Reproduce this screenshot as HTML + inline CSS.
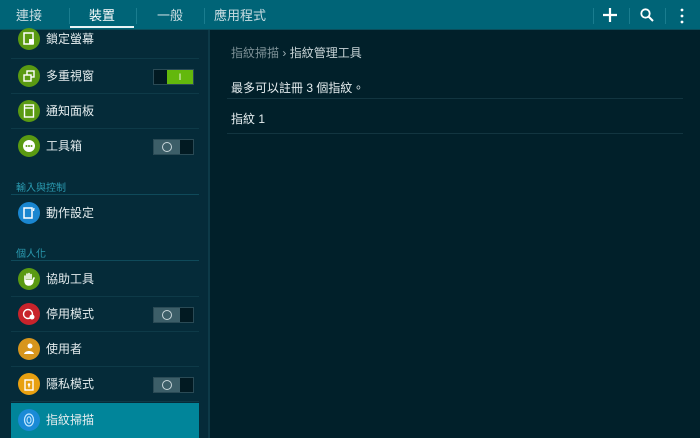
<!DOCTYPE html>
<html><head><meta charset="utf-8"><style>
*{margin:0;padding:0;box-sizing:border-box}
body{width:700px;height:438px;overflow:hidden;background:#01202a;font-family:"Liberation Sans","Noto Sans CJK TC",sans-serif;position:relative;color:#e6eef0}
.top{position:absolute;left:0;top:0;width:700px;height:30px;background:#006477;border-bottom:1px solid #0b4e5c}
.tab{position:absolute;top:0;height:29px;line-height:31px;font-size:13px;color:#c9dde2}
.sep{position:absolute;top:8px;width:1px;height:16px;background:#1a7d8f}
.ul{position:absolute;left:70px;top:26px;width:64px;height:2px;background:#e8f3f5}
.left{position:absolute;left:0;top:30px;width:208px;height:408px;background:#052b39}
.vb{position:absolute;left:208px;top:30px;width:2px;height:408px;background:#0d3a48}
.row{position:absolute;left:11px;width:188px;height:35px;border-bottom:1px solid #0e3a48}
.row .ic{position:absolute;left:7px;top:6px;width:22px;height:22px;border-radius:50%}
.row .ic svg{position:absolute;left:0;top:0}
.row .t{position:absolute;left:35px;top:0;line-height:34px;font-size:12px;color:#e4ecee}
.tg{position:absolute;left:142px;top:10px;width:41px;height:16px;background:#021a22;border:1px solid #2a4a55}
.tg.on .k{position:absolute;right:0;top:0;width:26px;height:14px;background:#63b80c;color:#fff;font-size:9px;text-align:center;line-height:14px}
.tg.off .k{position:absolute;left:0;top:0;width:26px;height:14px;background:#3c5e68}
.tg.off .k:after{content:"";position:absolute;left:8px;top:2px;width:8px;height:8px;border:1.5px solid #c8d6da;border-radius:50%}
.hd{position:absolute;left:16px;font-size:10px;color:#2a9ab0}
.hl{position:absolute;left:11px;width:188px;height:1px;background:#0f4a5a}
.sel{background:#01859a}
.rt{position:absolute;font-size:12px}
.ln{position:absolute;left:227px;width:456px;height:1px;background:#123540}
</style></head><body>
<div class="top">
<div class="tab" style="left:16px">連接</div>
<div class="sep" style="left:69px"></div>
<div class="tab" style="left:89px;color:#fff">裝置</div>
<div class="sep" style="left:136px"></div>
<div class="tab" style="left:157px">一般</div>
<div class="sep" style="left:204px"></div>
<div class="tab" style="left:214px">應用程式</div>
<div class="ul"></div>
<div class="sep" style="left:593px"></div>
<div class="sep" style="left:629px"></div>
<div class="sep" style="left:665px"></div>
<svg style="position:absolute;left:602px;top:7px" width="16" height="16"><path d="M8 1V15M1 8H15" stroke="#fff" stroke-width="2.2"/></svg>
<svg style="position:absolute;left:640px;top:8px" width="14" height="14"><circle cx="5.5" cy="5.5" r="4.2" stroke="#fff" stroke-width="1.8" fill="none"/><path d="M8.5 8.5L13 13" stroke="#fff" stroke-width="2"/></svg>
<svg style="position:absolute;left:680px;top:8px" width="4" height="16"><circle cx="2" cy="2" r="1.4" fill="#fff"/><circle cx="2" cy="8" r="1.4" fill="#fff"/><circle cx="2" cy="14" r="1.4" fill="#fff"/></svg>
</div>
<div class="left"></div><div class="vb"></div>
<div class="row" style="top:24px"><div class="ic" style="background:#5a9a12;top:4px"><svg width="22" height="22"><rect x="6" y="5" width="9" height="11" fill="none" stroke="#fff" stroke-width="1.5"/><rect x="11" y="11" width="5" height="5" fill="#fff"/></svg></div><div class="t" style="line-height:30px">鎖定螢幕</div></div>
<div class="row" style="top:59px"><div class="ic" style="background:#5a9a12"><svg width="22" height="22"><rect x="9" y="6" width="7" height="6" fill="none" stroke="#fff" stroke-width="1.4"/><rect x="6" y="10" width="7" height="6" fill="#5a9a12" stroke="#fff" stroke-width="1.4"/></svg></div><div class="t">多重視窗</div><div class="tg on"><div class="k">I</div></div></div>
<div class="row" style="top:94px"><div class="ic" style="background:#5a9a12"><svg width="22" height="22"><rect x="6.5" y="5" width="9" height="12" fill="none" stroke="#fff" stroke-width="1.4"/><path d="M6.5 8H15.5" stroke="#fff" stroke-width="1.4"/></svg></div><div class="t">通知面板</div></div>
<div class="row" style="top:129px;border:none"><div class="ic" style="background:#5a9a12"><svg width="22" height="22"><circle cx="11" cy="11" r="6" fill="#fff"/><circle cx="8.5" cy="11" r="1" fill="#5a9a12"/><circle cx="11" cy="11" r="1" fill="#5a9a12"/><circle cx="13.5" cy="11" r="1" fill="#5a9a12"/></svg></div><div class="t">工具箱</div><div class="tg off"><div class="k"></div></div></div>
<div class="hd" style="top:179px">輸入與控制</div><div class="hl" style="top:194px"></div>
<div class="row" style="top:196px;border:none"><div class="ic" style="background:#1a86d0"><svg width="22" height="22"><rect x="6" y="6" width="8" height="10" fill="none" stroke="#fff" stroke-width="1.5"/><path d="M16 6L15.5 9" stroke="#fff" stroke-width="1.2"/></svg></div><div class="t">動作設定</div></div>
<div class="hd" style="top:245px">個人化</div><div class="hl" style="top:260px"></div>
<div class="row" style="top:262px"><div class="ic" style="background:#5a9a12"><svg width="22" height="22"><path d="M7 12V8M9 11V6M11 11V5.5M13 11V6.5M15 12L16 10M7 12C7 16 9 17 11 17S15 15.5 15 12" stroke="#fff" stroke-width="1.6" fill="#fff" stroke-linecap="round"/></svg></div><div class="t">協助工具</div></div>
<div class="row" style="top:297px"><div class="ic" style="background:#c8232b"><svg width="22" height="22"><circle cx="10" cy="11" r="4.5" fill="none" stroke="#fff" stroke-width="1.4"/><circle cx="14" cy="14" r="2.5" fill="#fff"/></svg></div><div class="t">停用模式</div><div class="tg off"><div class="k"></div></div></div>
<div class="row" style="top:332px"><div class="ic" style="background:#d7951c"><svg width="22" height="22"><circle cx="12" cy="8" r="2.5" fill="#fff"/><path d="M6 16C7 12 15 12 16 16Z" fill="#fff"/></svg></div><div class="t">使用者</div></div>
<div class="row" style="top:367px"><div class="ic" style="background:#e8a010"><svg width="22" height="22"><rect x="7" y="7" width="8" height="10" fill="none" stroke="#fff" stroke-width="1.4"/><circle cx="11" cy="11.5" r="1.3" fill="#fff"/><path d="M11 12V14.5" stroke="#fff" stroke-width="1.2"/></svg></div><div class="t">隱私模式</div><div class="tg off"><div class="k"></div></div></div>
<div class="row sel" style="top:403px;border:none"><div class="ic" style="background:#1a8ad6"><svg width="22" height="22"><ellipse cx="11" cy="11" rx="4.5" ry="6" fill="none" stroke="#bfe6ff" stroke-width="1.3"/><ellipse cx="11" cy="11" rx="2" ry="3.2" fill="none" stroke="#bfe6ff" stroke-width="1.1"/></svg></div><div class="t">指紋掃描</div></div>
<div class="rt" style="left:231px;top:44px;color:#7c9096">指紋掃描 <span style="color:#9fb0b5">›</span> <span style="color:#c8d4d7">指紋管理工具</span></div>
<div class="rt" style="left:231px;top:79px">最多可以註冊 3 個指紋。</div>
<div class="ln" style="top:98px"></div>
<div class="rt" style="left:231px;top:110px">指紋 1</div>
<div class="ln" style="top:133px"></div>
</body></html>
